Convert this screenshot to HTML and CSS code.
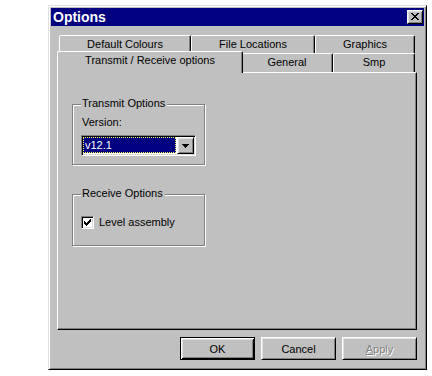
FILE: index.html
```html
<!DOCTYPE html>
<html lang="en">
<head>
    <meta charset="UTF-8">
    <title>Options</title>
    <link rel="stylesheet" href="styles.css">
</head>
<body>
    <div class="window">
        <div class="titlebar">
            <span class="title">Options</span>
            <span class="close-btn">
                <svg width="8" height="7" viewBox="0 0 8 7" shape-rendering="crispEdges">
                    <path d="M0 0h2v1h-2zM6 0h2v1h-2zM1 1h2v1h-2zM5 1h2v1h-2zM2 2h4v1h-4zM3 3h2v1h-2zM2 4h4v1h-4zM1 5h2v1h-2zM5 5h2v1h-2zM0 6h2v1h-2zM6 6h2v1h-2z" fill="#000"/>
                </svg>
            </span>
        </div>

        <div class="dialog-body">
            <div class="tab-control">
                <div class="tab-row back-row">
                    <div class="tab tab-colours">Default Colours</div>
                    <div class="tab tab-files">File Locations</div>
                    <div class="tab tab-graphics">Graphics</div>
                </div>
                <div class="tab-row front-row">
                    <div class="tab tab-transmit active">Transmit / Receive options</div>
                    <div class="tab tab-general">General</div>
                    <div class="tab tab-smp">Smp</div>
                </div>

                <div class="tab-panel">
                    <div class="group transmit-group">
                        <span class="group-title">Transmit Options</span>
                        <div class="field-label">Version:</div>
                        <div class="combo">
                            <span class="combo-value">v12.1</span>
                            <span class="combo-btn">
                                <svg width="7" height="4" viewBox="0 0 7 4" shape-rendering="crispEdges">
                                    <path d="M0 0h7v1h-7zM1 1h5v1h-5zM2 2h3v1h-3zM3 3h1v1h-1z" fill="#000"/>
                                </svg>
                            </span>
                        </div>
                    </div>

                    <div class="group receive-group">
                        <span class="group-title">Receive Options</span>
                        <div class="check-row">
                            <span class="checkbox">
                                <svg width="7" height="7" viewBox="0 0 7 7" shape-rendering="crispEdges">
                                    <path d="M6 0h1v1h-1zM5 1h2v1h-2zM0 2h1v1h-1zM4 2h3v1h-3zM0 3h2v1h-2zM3 3h3v1h-3zM0 4h5v1h-5zM1 5h3v1h-3zM2 6h1v1h-1z" fill="#000"/>
                                </svg>
                            </span>
                            <span class="check-label">Level assembly</span>
                        </div>
                    </div>
                </div>
            </div>

            <div class="button-row">
                <span class="btn default">OK</span>
                <span class="btn">Cancel</span>
                <span class="btn disabled"><u>A</u>pply</span>
            </div>
        </div>
    </div>
</body>
</html>
```

FILE: styles.css
```css
body {
    margin: 0;
    background-color: #fff;
    font-family: "Liberation Sans", Arial, sans-serif;
    font-size: 11px;
    color: #000;
}

.window {
    box-sizing: border-box;
    width: 379px;
    height: 365px;
    margin: 5px 0 0 48px;
    padding: 2px;
    background-color: #c0c0c0;
    border: 1px solid;
    border-color: #dfdfdf #000 #000 #dfdfdf;
    box-shadow: inset 1px 1px #fff, inset -1px -1px #808080;
    display: flex;
    flex-direction: column;
}

.titlebar {
    height: 18px;
    background-color: #000080;
    display: flex;
    align-items: center;
    justify-content: space-between;
    padding: 0 1px 0 2px;
}

.title {
    color: #fff;
    font-weight: bold;
    font-size: 14px;
}

.close-btn,
.combo-btn {
    box-sizing: border-box;
    background-color: #c0c0c0;
    border: 1px solid;
    border-color: #fff #000 #000 #fff;
    box-shadow: inset 1px 1px #dfdfdf, inset -1px -1px #808080;
    display: flex;
    align-items: center;
    justify-content: center;
}

.close-btn {
    width: 16px;
    height: 14px;
}

.close-btn svg {
    margin: 0 1px 1px 0;
}

.dialog-body {
    flex: 1;
    display: flex;
    flex-direction: column;
    padding: 9px 7px 7px 6px;
}

/* tabs */
.tab-row {
    display: flex;
    padding-left: 2px;
}

.back-row {
    height: 18px;
}

.front-row {
    height: 19px;
}

.tab {
    box-sizing: border-box;
    height: 100%;
    padding-top: 2px;
    line-height: 13px;
    text-align: center;
    white-space: nowrap;
    background-color: #c0c0c0;
    border: 1px solid;
    border-bottom: none;
    border-color: #fff #000 transparent #fff;
    border-radius: 2px 2px 0 0;
    box-shadow: inset -1px 0 #808080;
}

.tab-colours { width: 132px; }
.tab-files { width: 124px; }
.tab-graphics { width: 100px; }
.tab-general { width: 92px; }
.tab-smp { width: 82px; }

.tab-transmit {
    width: 186px;
}

.tab.active {
    position: relative;
    z-index: 1;
    height: 22px;
    margin: -2px -2px 0 -2px;
}

.tab-panel {
    box-sizing: border-box;
    height: 258px;
    padding: 31px 0 0 14px;
    border: 1px solid;
    border-color: #fff #000 #000 #fff;
    box-shadow: inset -1px -1px #808080;
}

/* group boxes */
.group {
    position: relative;
    box-sizing: border-box;
    width: 133px;
    padding: 0 8px;
    border: 1px solid #808080;
    box-shadow: inset 1px 1px #fff, 1px 1px #fff;
}

.group-title {
    position: absolute;
    top: -8px;
    left: 8px;
    padding: 0 2px 0 1px;
    line-height: 13px;
    background-color: #c0c0c0;
}

.transmit-group {
    height: 61px;
    padding-top: 11px;
}

.receive-group {
    height: 52px;
    margin-top: 29px;
    padding-top: 21px;
}

.field-label {
    line-height: 13px;
    padding-left: 1px;
}

.combo {
    box-sizing: border-box;
    width: 115px;
    height: 21px;
    margin-top: 6px;
    padding: 2px;
    display: flex;
    background-color: #fff;
    border: 1px solid;
    border-color: #808080 #fff #fff #808080;
    box-shadow: inset 1px 1px #000, inset -1px -1px #dfdfdf;
}

.combo-value {
    box-sizing: border-box;
    flex: 1;
    margin: -1px 1px 0 -1px;
    padding-left: 1px;
    line-height: 15px;
    color: #fff;
    background-color: #000080;
    border: 1px dotted #ffff60;
}

.combo-btn {
    width: 17px;
    height: 17px;
    margin: -1px -1px 0 0;
}

.check-row {
    display: flex;
    align-items: center;
}

.checkbox {
    box-sizing: border-box;
    width: 13px;
    height: 13px;
    display: flex;
    align-items: center;
    justify-content: center;
    background-color: #fff;
    border: 1px solid;
    border-color: #808080 #fff #fff #808080;
    box-shadow: inset 1px 1px #000, inset -1px -1px #dfdfdf;
}

.check-label {
    margin-left: 5px;
    line-height: 13px;
}

/* dialog buttons */
.button-row {
    display: flex;
    justify-content: flex-end;
    gap: 6px;
    margin-top: 7px;
}

.btn {
    box-sizing: border-box;
    width: 75px;
    height: 23px;
    display: flex;
    align-items: center;
    justify-content: center;
    background-color: #c0c0c0;
    border: 1px solid;
    border-color: #fff #000 #000 #fff;
    box-shadow: inset 1px 1px #dfdfdf, inset -1px -1px #808080;
}

.btn.default {
    border-color: #000;
    box-shadow: inset 1px 1px #fff, inset -1px -1px #000, inset 2px 2px #dfdfdf, inset -2px -2px #808080;
}

.btn.disabled {
    color: #808080;
    text-shadow: 1px 1px 0 #fff;
}

.btn.disabled u {
    text-decoration: underline;
}
```
